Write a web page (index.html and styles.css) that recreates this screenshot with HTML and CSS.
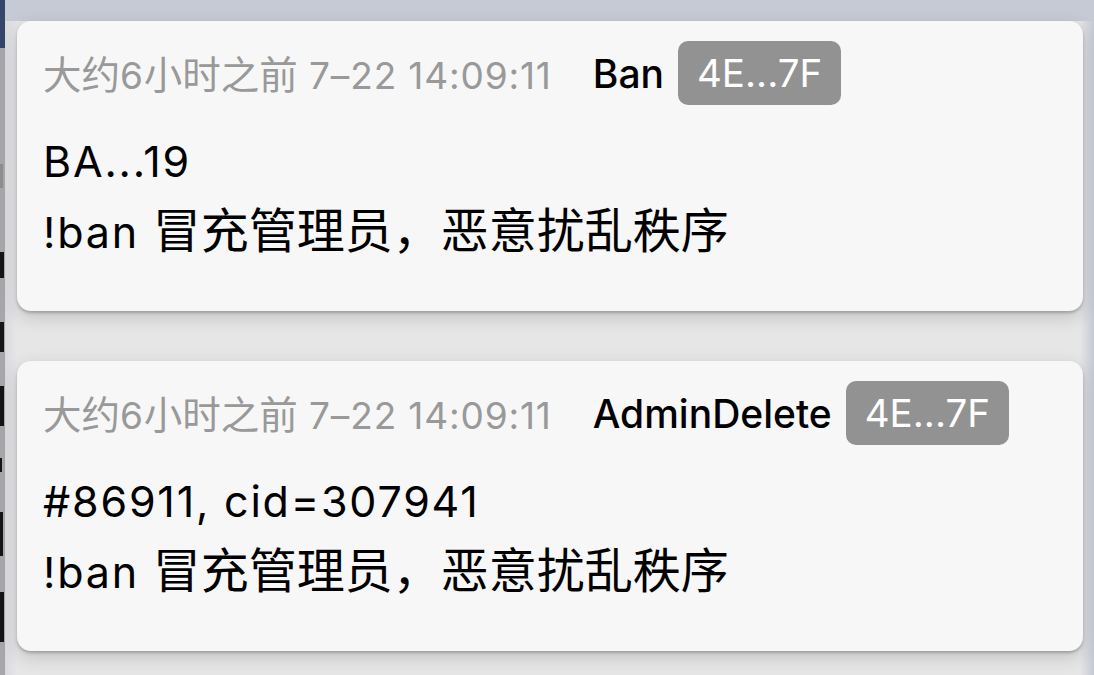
FILE: index.html
```html
<!DOCTYPE html>
<html lang="zh">
<head>
<meta charset="utf-8">
<title>Logs</title>
<link rel="stylesheet" href="styles.css">
</head>
<body>
<div class="page">
  <div class="side">
    <div class="side-top"></div>
    <div class="side-marks">
      <i class="mark ghost"></i>
      <i class="mark m1"></i>
      <i class="mark m2"></i>
      <i class="mark m3"></i>
      <i class="mark m4"></i>
      <i class="mark m5"></i>
      <i class="mark m6"></i>
    </div>
  </div>
  <div class="main">
    <div class="list">
      <div class="card">
        <div class="head">
          <span class="time"><span class="zh">大约</span>6<span class="zh">小时之前</span> 7–22 14:09:11</span>
          <span class="action">Ban</span>
          <span class="badge">4E...7F</span>
        </div>
        <div class="body">
          <div class="line">BA...19</div>
          <div class="line">!ban <span class="zh">冒充管理员，恶意扰乱秩序</span></div>
        </div>
      </div>
      <div class="card">
        <div class="head">
          <span class="time"><span class="zh">大约</span>6<span class="zh">小时之前</span> 7–22 14:09:11</span>
          <span class="action">AdminDelete</span>
          <span class="badge">4E...7F</span>
        </div>
        <div class="body">
          <div class="line">#86911, cid=307941</div>
          <div class="line">!ban <span class="zh">冒充管理员，恶意扰乱秩序</span></div>
        </div>
      </div>
    </div>
  </div>
</div>
</body>
</html>
```

FILE: styles.css
```css
* { box-sizing: border-box; }
html, body { margin: 0; padding: 0; }
body {
  width: 1094px;
  height: 675px;
  overflow: hidden;
  background: #c4c9d3;
  font-family: "Inter", "Noto Sans CJK SC", sans-serif;
}
.page {
  display: flex;
  height: 675px;
}
.side {
  width: 5px;
  flex: none;
  display: flex;
  flex-direction: column;
  background: #a7a7a9;
  overflow: hidden;
}
.side-top {
  height: 48px;
  background: #34456c;
  flex: none;
}
.side-marks {
  display: flex;
  flex-direction: column;
  padding-top: 116px;
}
.mark {
  display: block;
  width: 4px;
  background: #151515;
}
.mark.ghost { height: 24px; background: #8e8e8e; margin-bottom: 64px; width: 3px; }
.mark.m1 { height: 26px; margin-bottom: 44px; }
.mark.m2 { height: 30px; margin-bottom: 34px; }
.mark.m3 { height: 40px; margin-bottom: 32px; }
.mark.m4 { height: 14px; margin-bottom: 40px; width: 2px; }
.mark.m5 { height: 44px; margin-bottom: 36px; width: 3px; }
.mark.m6 { height: 50px; }
.main {
  flex: 1;
  padding: 21px 11px 0 12px;
  background: linear-gradient(to right, #d9dadf 0, #e6e6e7 12px, #e6e6e7 calc(100% - 14px), #c4c9d3 100%);
  position: relative;
}
.main::before {
  content: "";
  position: absolute;
  left: 0; right: 0; top: 0;
  height: 21px;
  background: #c5cad4;
}
.list {
  display: flex;
  flex-direction: column;
  gap: 50px;
  position: relative;
}
.card {
  background: #f7f7f7;
  border-radius: 14px;
  height: 290px;
  padding: 20px 26px 0 26px;
  box-shadow: 0 2px 3px rgba(0, 0, 0, 0.22), 0 6px 18px rgba(0, 0, 0, 0.16);
}
.head {
  display: flex;
  align-items: center;
  height: 64px;
}
.time {
  color: #999;
  font-size: 37px;
  letter-spacing: 0.85px;
  white-space: nowrap;
  margin-top: -2px;
}
.time .zh { font-size: 38.5px; letter-spacing: 0; font-family: "Noto Sans CJK SC", sans-serif; }
.action {
  color: #000;
  font-weight: 500;
  margin-left: 41px;
  font-size: 39px;
}
.badge {
  margin-left: 14px;
  background: #929292;
  color: #fff;
  border-radius: 10px;
  height: 64px;
  padding: 0 19px;
  display: flex;
  align-items: center;
  font-size: 38.5px;
}
.body {
  margin-top: 23px;
  color: #000;
  font-size: 43px;
  letter-spacing: 1.8px;
}
.body .zh { font-size: 48px; letter-spacing: 0; font-family: "Noto Sans CJK SC", sans-serif; }
.line {
  height: 66px;
  line-height: 66px;
  white-space: nowrap;
}
```
